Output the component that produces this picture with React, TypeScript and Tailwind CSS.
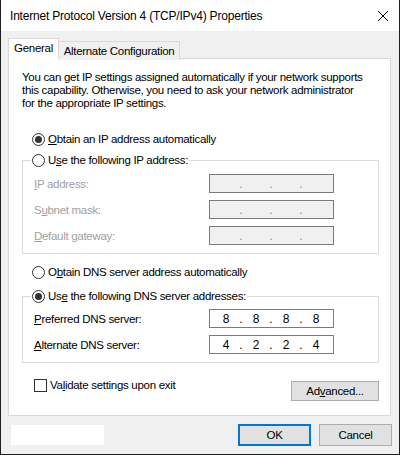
import React from "react";

const font = { fontFamily: '"Liberation Sans", Arial, sans-serif' };

function Radio({ checked }: { checked?: boolean }) {
  return (
    <span className="flex h-[13px] w-[13px] shrink-0 items-center justify-center rounded-full border border-[#333333] bg-white">
      {checked && <span className="h-[7px] w-[7px] rounded-full bg-[#333333]" />}
    </span>
  );
}

function RadioRow({ checked, children }: { checked?: boolean; children: React.ReactNode }) {
  return (
    <div className="flex h-[16px] items-center gap-[3px] whitespace-nowrap">
      <Radio checked={checked} />
      <span>{children}</span>
    </div>
  );
}

function IpBox({ value, disabled }: { value?: string[]; disabled?: boolean }) {
  const parts = value ?? ["", "", "", ""];
  return (
    <div
      className={
        "flex h-[19px] w-[125px] items-center border border-[#7a7a7a] pl-[3px] text-[12px] tracking-normal " +
        (disabled ? "bg-[#f0f0f0] text-[#8a8aa0]" : "bg-white text-black")
      }
    >
      {parts.map((p, i) => (
        <React.Fragment key={i}>
          <span className="w-[26px] text-center">{p}</span>
          {i < 3 && <span className="w-[4px] text-center">.</span>}
        </React.Fragment>
      ))}
    </div>
  );
}

function FieldRow({ label, disabled, value }: { label: React.ReactNode; disabled?: boolean; value?: string[] }) {
  return (
    <div className="flex h-[19px] items-center">
      <span className={"ml-[3px] w-[175px] " + (disabled ? "text-[#a0a0a0]" : "text-black")}>{label}</span>
      <IpBox disabled={disabled} value={value} />
    </div>
  );
}

function Button({ children, primary, className = "" }: { children: React.ReactNode; primary?: boolean; className?: string }) {
  return (
    <div
      className={
        "flex items-center justify-center bg-[#e1e1e1] " +
        (primary ? "border-2 border-[#0078d7] " : "border border-[#adadad] ") +
        className
      }
    >
      {children}
    </div>
  );
}

export default function App() {
  return (
    <div
      className="flex h-[455px] w-[400px] flex-col border-x border-b border-[#1f1f1f] bg-[#f0f0f0] text-[11.5px] leading-[16px] tracking-[-0.3px] text-black"
      style={font}
    >
      {/* title bar */}
      <div className="flex h-[31px] shrink-0 items-center justify-between bg-white pl-[9px] pr-[9px] text-[12px] tracking-[-0.2px]">
        <span>Internet Protocol Version 4 (TCP/IPv4) Properties</span>
        <svg width="12" height="12" viewBox="0 0 12 12" className="mr-[1px]">
          <path d="M1 1 L11 11 M11 1 L1 11" stroke="#000" strokeWidth="1" />
        </svg>
      </div>

      <div className="flex flex-col pl-[7px] pr-[7px] pt-[7px]">
        {/* tabs */}
        <div className="relative z-10 flex items-end whitespace-nowrap">
          <div className="flex h-[21px] w-[51px] items-center justify-center border-x border-t border-[#d9d9d9] bg-white pb-[2px]">
            General
          </div>
          <div className="-mb-[1px] flex h-[19px] w-[121px] items-center justify-center border-r border-t border-[#d9d9d9] bg-[#f0f0f0]">
            Alternate Configuration
          </div>
        </div>

        {/* panel */}
        <div className="-mt-[1px] flex h-[358px] w-[383px] flex-col border border-[#d9d9d9] bg-white pl-[13px] pr-[11px]">
          <p className="mt-[12px] whitespace-nowrap leading-[13px]">
            You can get IP settings assigned automatically if your network supports
            <br />
            this capability. Otherwise, you need to ask your network administrator
            <br />
            for the appropriate IP settings.
          </p>

          <div className="ml-[10px] mt-[21px]">
            <RadioRow checked>
              <u>O</u>btain an IP address automatically
            </RadioRow>
          </div>

          <fieldset className="mt-[5px] border border-[#dcdcdc] pb-[8px] pl-[8px]">
            <legend className="bg-white px-[1px]">
              <RadioRow>
                U<u>s</u>e the following IP address:
              </RadioRow>
            </legend>
            <div className="mt-[6px] flex flex-col gap-[7px]">
              <FieldRow disabled label={<><u>I</u>P address:</>} />
              <FieldRow disabled label={<>S<u>u</u>bnet mask:</>} />
              <FieldRow disabled label={<><u>D</u>efault gateway:</>} />
            </div>
          </fieldset>

          <div className="ml-[10px] mt-[10px]">
            <RadioRow>
              O<u>b</u>tain DNS server address automatically
            </RadioRow>
          </div>

          <fieldset className="mt-[8px] border border-[#dcdcdc] pb-[8px] pl-[8px]">
            <legend className="bg-white px-[1px]">
              <RadioRow checked>
                Us<u>e</u> the following DNS server addresses:
              </RadioRow>
            </legend>
            <div className="mt-[5px] flex flex-col gap-[7px]">
              <FieldRow label={<><u>P</u>referred DNS server:</>} value={["8", "8", "8", "8"]} />
              <FieldRow label={<><u>A</u>lternate DNS server:</>} value={["4", "2", "2", "4"]} />
            </div>
          </fieldset>

          <div className="mt-[14px] flex items-start justify-between">
            <div className="ml-[12px] flex h-[16px] items-center gap-[3px]">
              <span className="h-[13px] w-[13px] border border-[#333333] bg-white" />
              <span>
                Va<u>l</u>idate settings upon exit
              </span>
            </div>
            <Button className="mt-[4px] h-[20px] w-[88px]">
              Ad<u>v</u>anced...
            </Button>
          </div>
        </div>

        {/* footer */}
        <div className="mt-[8px] flex items-start">
          <div className="ml-[3px] mt-[1px] h-[20px] w-[93px] bg-white" />
          <Button primary className="ml-auto h-[22px] w-[73px]">
            OK
          </Button>
          <Button className="ml-[8px] h-[22px] w-[73px]">Cancel</Button>
        </div>
      </div>
    </div>
  );
}
